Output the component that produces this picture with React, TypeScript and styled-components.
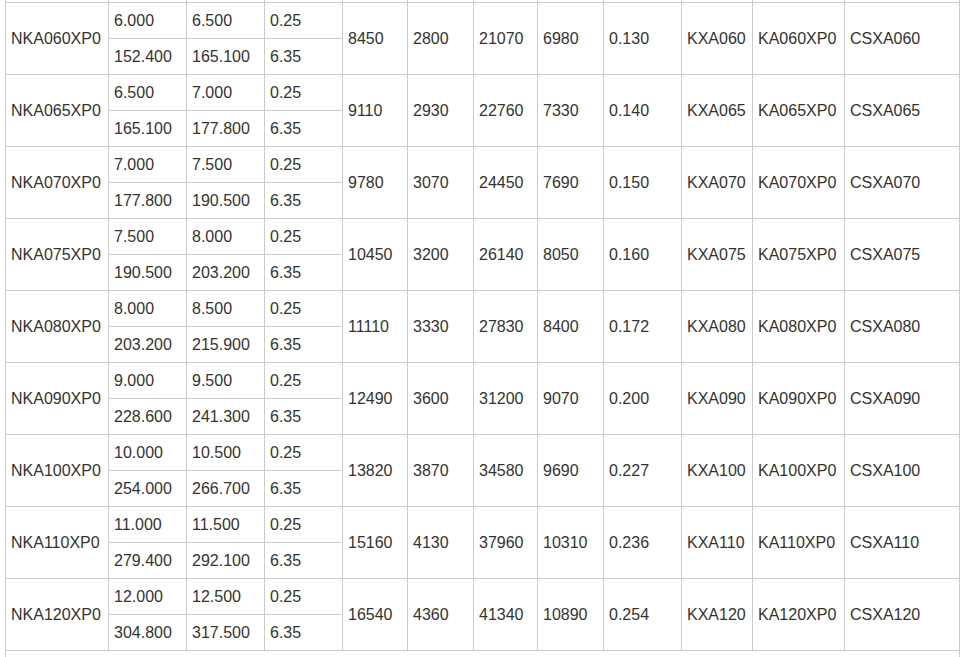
import React from 'react';
import styled, { createGlobalStyle } from 'styled-components';

const GlobalStyle = createGlobalStyle`
  html, body {
    margin: 0;
    padding: 0;
    background: #fff;
  }
`;

const Viewport = styled.div`
  height: 657px;
  overflow: hidden;
`;

const Table = styled.table`
  border-collapse: collapse;
  table-layout: fixed;
  width: 955px;
  margin: -70px 0 0 5px;
  font-family: "Liberation Sans", Arial, sans-serif;
  font-size: 16px;
  color: #333;
`;

const Row = styled.tr`
  height: 36px;
`;

const Cell = styled.td`
  border: 1px solid #cccccc;
  padding: 0 5px;
  vertical-align: middle;
  white-space: nowrap;
  overflow: hidden;
`;

const TailRow = styled.tr`
  height: 40px;
`;

type Item = {
  part: string;
  inch: [string, string, string];
  mm: [string, string, string];
  specs: [string, string, string, string, string];
  kx: string;
  ka: string;
  cs: string;
};

// the group above the view only shows its bottom edge, so it carries no text
const hidden: Item = {
  part: '', inch: ['', '', ''], mm: ['', '', ''], specs: ['', '', '', '', ''], kx: '', ka: '', cs: '',
};

const items: Item[] = [
  { part: 'NKA060XP0', inch: ['6.000', '6.500', '0.25'], mm: ['152.400', '165.100', '6.35'], specs: ['8450', '2800', '21070', '6980', '0.130'], kx: 'KXA060', ka: 'KA060XP0', cs: 'CSXA060' },
  { part: 'NKA065XP0', inch: ['6.500', '7.000', '0.25'], mm: ['165.100', '177.800', '6.35'], specs: ['9110', '2930', '22760', '7330', '0.140'], kx: 'KXA065', ka: 'KA065XP0', cs: 'CSXA065' },
  { part: 'NKA070XP0', inch: ['7.000', '7.500', '0.25'], mm: ['177.800', '190.500', '6.35'], specs: ['9780', '3070', '24450', '7690', '0.150'], kx: 'KXA070', ka: 'KA070XP0', cs: 'CSXA070' },
  { part: 'NKA075XP0', inch: ['7.500', '8.000', '0.25'], mm: ['190.500', '203.200', '6.35'], specs: ['10450', '3200', '26140', '8050', '0.160'], kx: 'KXA075', ka: 'KA075XP0', cs: 'CSXA075' },
  { part: 'NKA080XP0', inch: ['8.000', '8.500', '0.25'], mm: ['203.200', '215.900', '6.35'], specs: ['11110', '3330', '27830', '8400', '0.172'], kx: 'KXA080', ka: 'KA080XP0', cs: 'CSXA080' },
  { part: 'NKA090XP0', inch: ['9.000', '9.500', '0.25'], mm: ['228.600', '241.300', '6.35'], specs: ['12490', '3600', '31200', '9070', '0.200'], kx: 'KXA090', ka: 'KA090XP0', cs: 'CSXA090' },
  { part: 'NKA100XP0', inch: ['10.000', '10.500', '0.25'], mm: ['254.000', '266.700', '6.35'], specs: ['13820', '3870', '34580', '9690', '0.227'], kx: 'KXA100', ka: 'KA100XP0', cs: 'CSXA100' },
  { part: 'NKA110XP0', inch: ['11.000', '11.500', '0.25'], mm: ['279.400', '292.100', '6.35'], specs: ['15160', '4130', '37960', '10310', '0.236'], kx: 'KXA110', ka: 'KA110XP0', cs: 'CSXA110' },
  { part: 'NKA120XP0', inch: ['12.000', '12.500', '0.25'], mm: ['304.800', '317.500', '6.35'], specs: ['16540', '4360', '41340', '10890', '0.254'], kx: 'KXA120', ka: 'KA120XP0', cs: 'CSXA120' },
];

const widths = [103, 78, 78, 78, 65, 66, 64, 66, 78, 71, 92, 115];

const Group: React.FC<{ item: Item }> = ({ item }) => (
  <>
    <Row>
      <Cell rowSpan={2}>{item.part}</Cell>
      {item.inch.map((v, i) => (
        <Cell key={i}>{v}</Cell>
      ))}
      {item.specs.map((v, i) => (
        <Cell key={'s' + i} rowSpan={2}>{v}</Cell>
      ))}
      <Cell rowSpan={2}>{item.kx}</Cell>
      <Cell rowSpan={2}>{item.ka}</Cell>
      <Cell rowSpan={2}>{item.cs}</Cell>
    </Row>
    <Row>
      {item.mm.map((v, i) => (
        <Cell key={i}>{v}</Cell>
      ))}
    </Row>
  </>
);

export default function App() {
  return (
    <Viewport>
      <GlobalStyle />
      <Table>
        <colgroup>
          {widths.map((w, i) => (
            <col key={i} style={{ width: w }} />
          ))}
        </colgroup>
        <tbody>
          <Group item={hidden} />
          {items.map((item) => (
            <Group key={item.part} item={item} />
          ))}
          <TailRow>
            <Cell colSpan={12} />
          </TailRow>
        </tbody>
      </Table>
    </Viewport>
  );
}
